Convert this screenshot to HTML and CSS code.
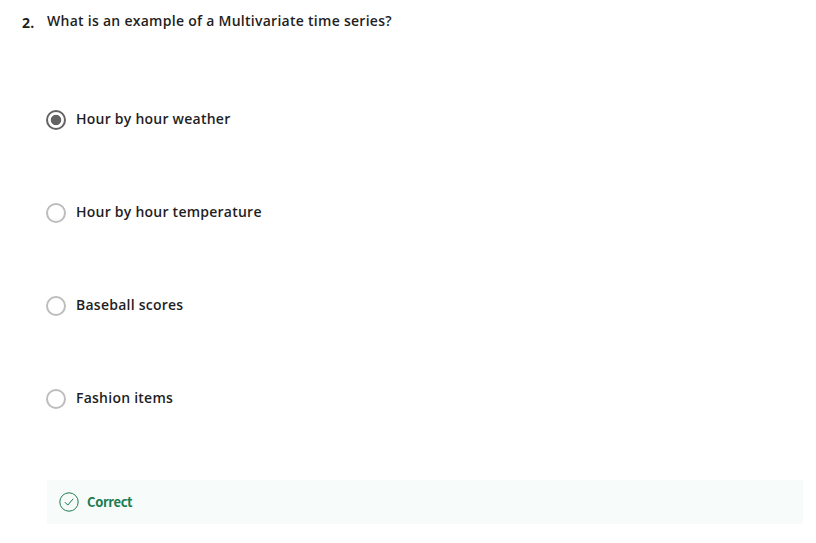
FILE: index.html
```html
<!DOCTYPE html>
<html lang="en">
<head>
<meta charset="utf-8">
<title>Quiz question</title>
<link rel="stylesheet" href="styles.css">
</head>
<body>
<main class="question">
  <span class="number">2.</span>
  <div class="content">
    <h1 class="prompt">What is an example of a Multivariate time series?</h1>
    <div class="options">
      <label class="option"><input class="radio" type="radio" name="answer" checked><span>Hour by hour weather</span></label>
      <label class="option"><input class="radio" type="radio" name="answer"><span>Hour by hour temperature</span></label>
      <label class="option"><input class="radio" type="radio" name="answer"><span>Baseball scores</span></label>
      <label class="option"><input class="radio" type="radio" name="answer"><span>Fashion items</span></label>
    </div>
    <div class="feedback">
      <svg class="check" viewBox="0 0 20 20" width="20" height="20" fill="none" stroke="currentColor"><circle cx="10" cy="10" r="9.2"/><path d="M5.8 10.1l3 3L14.2 6.8"/></svg>
      <span>Correct</span>
    </div>
  </div>
</main>
</body>
</html>
```
FILE: styles.css
```css
body {
  margin: 0;
  background: #fff;
  color: #1f1f1f;
  font: 600 14px/20px "Open Sans", sans-serif;
  letter-spacing: 0.26px;
}
.question {
  display: flex;
  padding: 11px 13px 0 22px;
}
.number {
  width: 25px;
  flex: none;
  padding-top: 2px;
  font-weight: 700;
}
.content {
  flex: 1;
}
.prompt {
  margin: 0;
  font: inherit;
  letter-spacing: 0.27px;
}
.options {
  display: grid;
  gap: 73px;
  margin: 78px 0 72px -1px;
  letter-spacing: 0.24px;
}
.option {
  display: flex;
  gap: 10px;
  height: 20px;
}
.radio {
  appearance: none;
  box-sizing: border-box;
  flex: none;
  width: 20px;
  height: 20px;
  margin: 1px 0 0;
  border: 2px solid #bdbdbd;
  border-radius: 50%;
}
.radio:checked {
  border-color: #636363;
  background: radial-gradient(circle, #636363 4.8px, #fff 5.6px);
}
.feedback {
  display: flex;
  align-items: center;
  gap: 8px;
  box-sizing: border-box;
  height: 44px;
  padding: 0 12px;
  background: #f7fbf9;
  color: #1d7c50;
  font: 700 13px/20px "Noto Sans CJK SC", sans-serif;
  letter-spacing: -0.35px;
}
```
